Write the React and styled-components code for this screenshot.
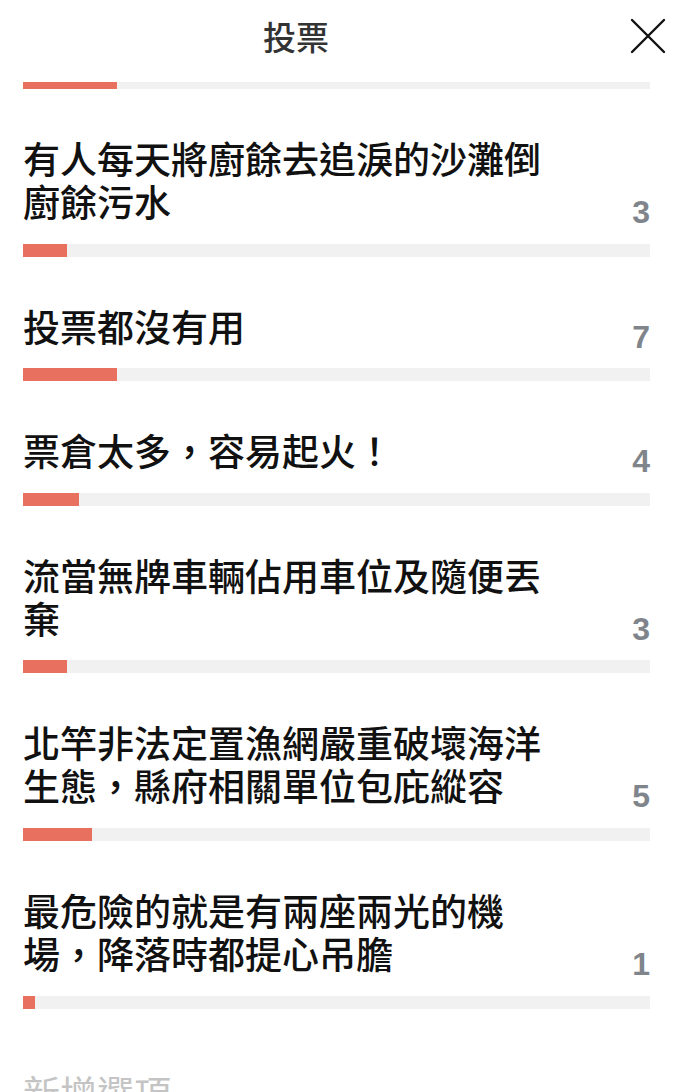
import React from 'react';
import styled, { createGlobalStyle } from 'styled-components';

const GlobalStyle = createGlobalStyle`
  html, body {
    margin: 0;
    padding: 0;
    background: #fff;
  }
  body {
    font-family: "Noto Sans CJK TC", "Noto Sans", sans-serif;
  }
`;

const Page = styled.div`
  width: 700px;
  height: 1092px;
  overflow: hidden;
  display: flex;
  flex-direction: column;
  background: #fff;
`;

const Header = styled.header`
  flex: 0 0 82px;
  display: flex;
  align-items: center;
  background: #fff;
  position: relative;
  z-index: 1;
`;

const Title = styled.h1`
  flex: 1;
  margin: 0 0 10px;
  text-align: center;
  font-size: 33px;
  font-weight: 500;
  color: #333;
  line-height: 1;
`;

const CloseButton = styled.button`
  flex: 0 0 108px;
  height: 60px;
  margin-bottom: 10px;
  padding: 0 0 0 4px;
  border: 0;
  background: transparent;
  display: flex;
  align-items: center;
  justify-content: center;
  cursor: pointer;
`;

const Scroller = styled.div`
  flex: 1;
  overflow: hidden;
  padding: 0 50px 0 23px;
`;

const Item = styled.div`
  padding-top: 48px;
`;

const Row = styled.div`
  display: flex;
  justify-content: space-between;
`;

const OptionText = styled.div`
  flex: 0 1 540px;
  font-size: 37px;
  line-height: 43px;
  font-weight: 500;
  color: #111;
  word-break: break-all;
  line-break: strict;
`;

const Count = styled.div`
  align-self: flex-end;
  margin-bottom: -5px;
  font-family: "Liberation Sans", Arial, sans-serif;
  font-weight: 700;
  font-size: 32px;
  line-height: 32px;
  color: #80848b;
`;

const Track = styled.div`
  height: 13px;
  margin-top: ${(p) => (p.$clipped ? '-6px' : '20.6px')};
  background: #f1f1f1;
`;

const Fill = styled.div`
  height: 100%;
  background: #e8705f;
`;

const AddOption = styled.div`
  padding-top: 62px;
  font-size: 37px;
  line-height: 43px;
  color: #c4c4c4;
`;

const options = [
  { text: '有人每天將廚餘去追淚的沙灘倒廚餘污水', votes: 3, fill: 44 },
  { text: '投票都沒有用', votes: 7, fill: 94 },
  { text: '票倉太多，容易起火！', votes: 4, fill: 56 },
  { text: '流當無牌車輛佔用車位及隨便丟棄', votes: 3, fill: 44 },
  { text: '北竿非法定置漁網嚴重破壞海洋生態，縣府相關單位包庇縱容', votes: 5, fill: 69 },
  { text: '最危險的就是有兩座兩光的機場，降落時都提心吊膽', votes: 1, fill: 12 },
];

const TRACK = 627;

const Bar = ({ fill, clipped }) => (
  <Track $clipped={clipped}>
    <Fill style={{ width: `${(fill / TRACK) * 100}%` }} />
  </Track>
);

const CloseIcon = () => (
  <svg width="36" height="36" viewBox="0 0 36 36">
    <path d="M2 2 L34 34 M34 2 L2 34" stroke="#111" strokeWidth="2.4" strokeLinecap="round" />
  </svg>
);

export default function App() {
  return (
    <Page>
      <GlobalStyle />
      <Header>
        <Title>投票</Title>
        <CloseButton aria-label="close">
          <CloseIcon />
        </CloseButton>
      </Header>
      <Scroller>
        <Bar fill={94} clipped />
        {options.map((o) => (
          <Item key={o.text}>
            <Row>
              <OptionText>{o.text}</OptionText>
              <Count>{o.votes}</Count>
            </Row>
            <Bar fill={o.fill} />
          </Item>
        ))}
        <AddOption>新增選項</AddOption>
      </Scroller>
    </Page>
  );
}
